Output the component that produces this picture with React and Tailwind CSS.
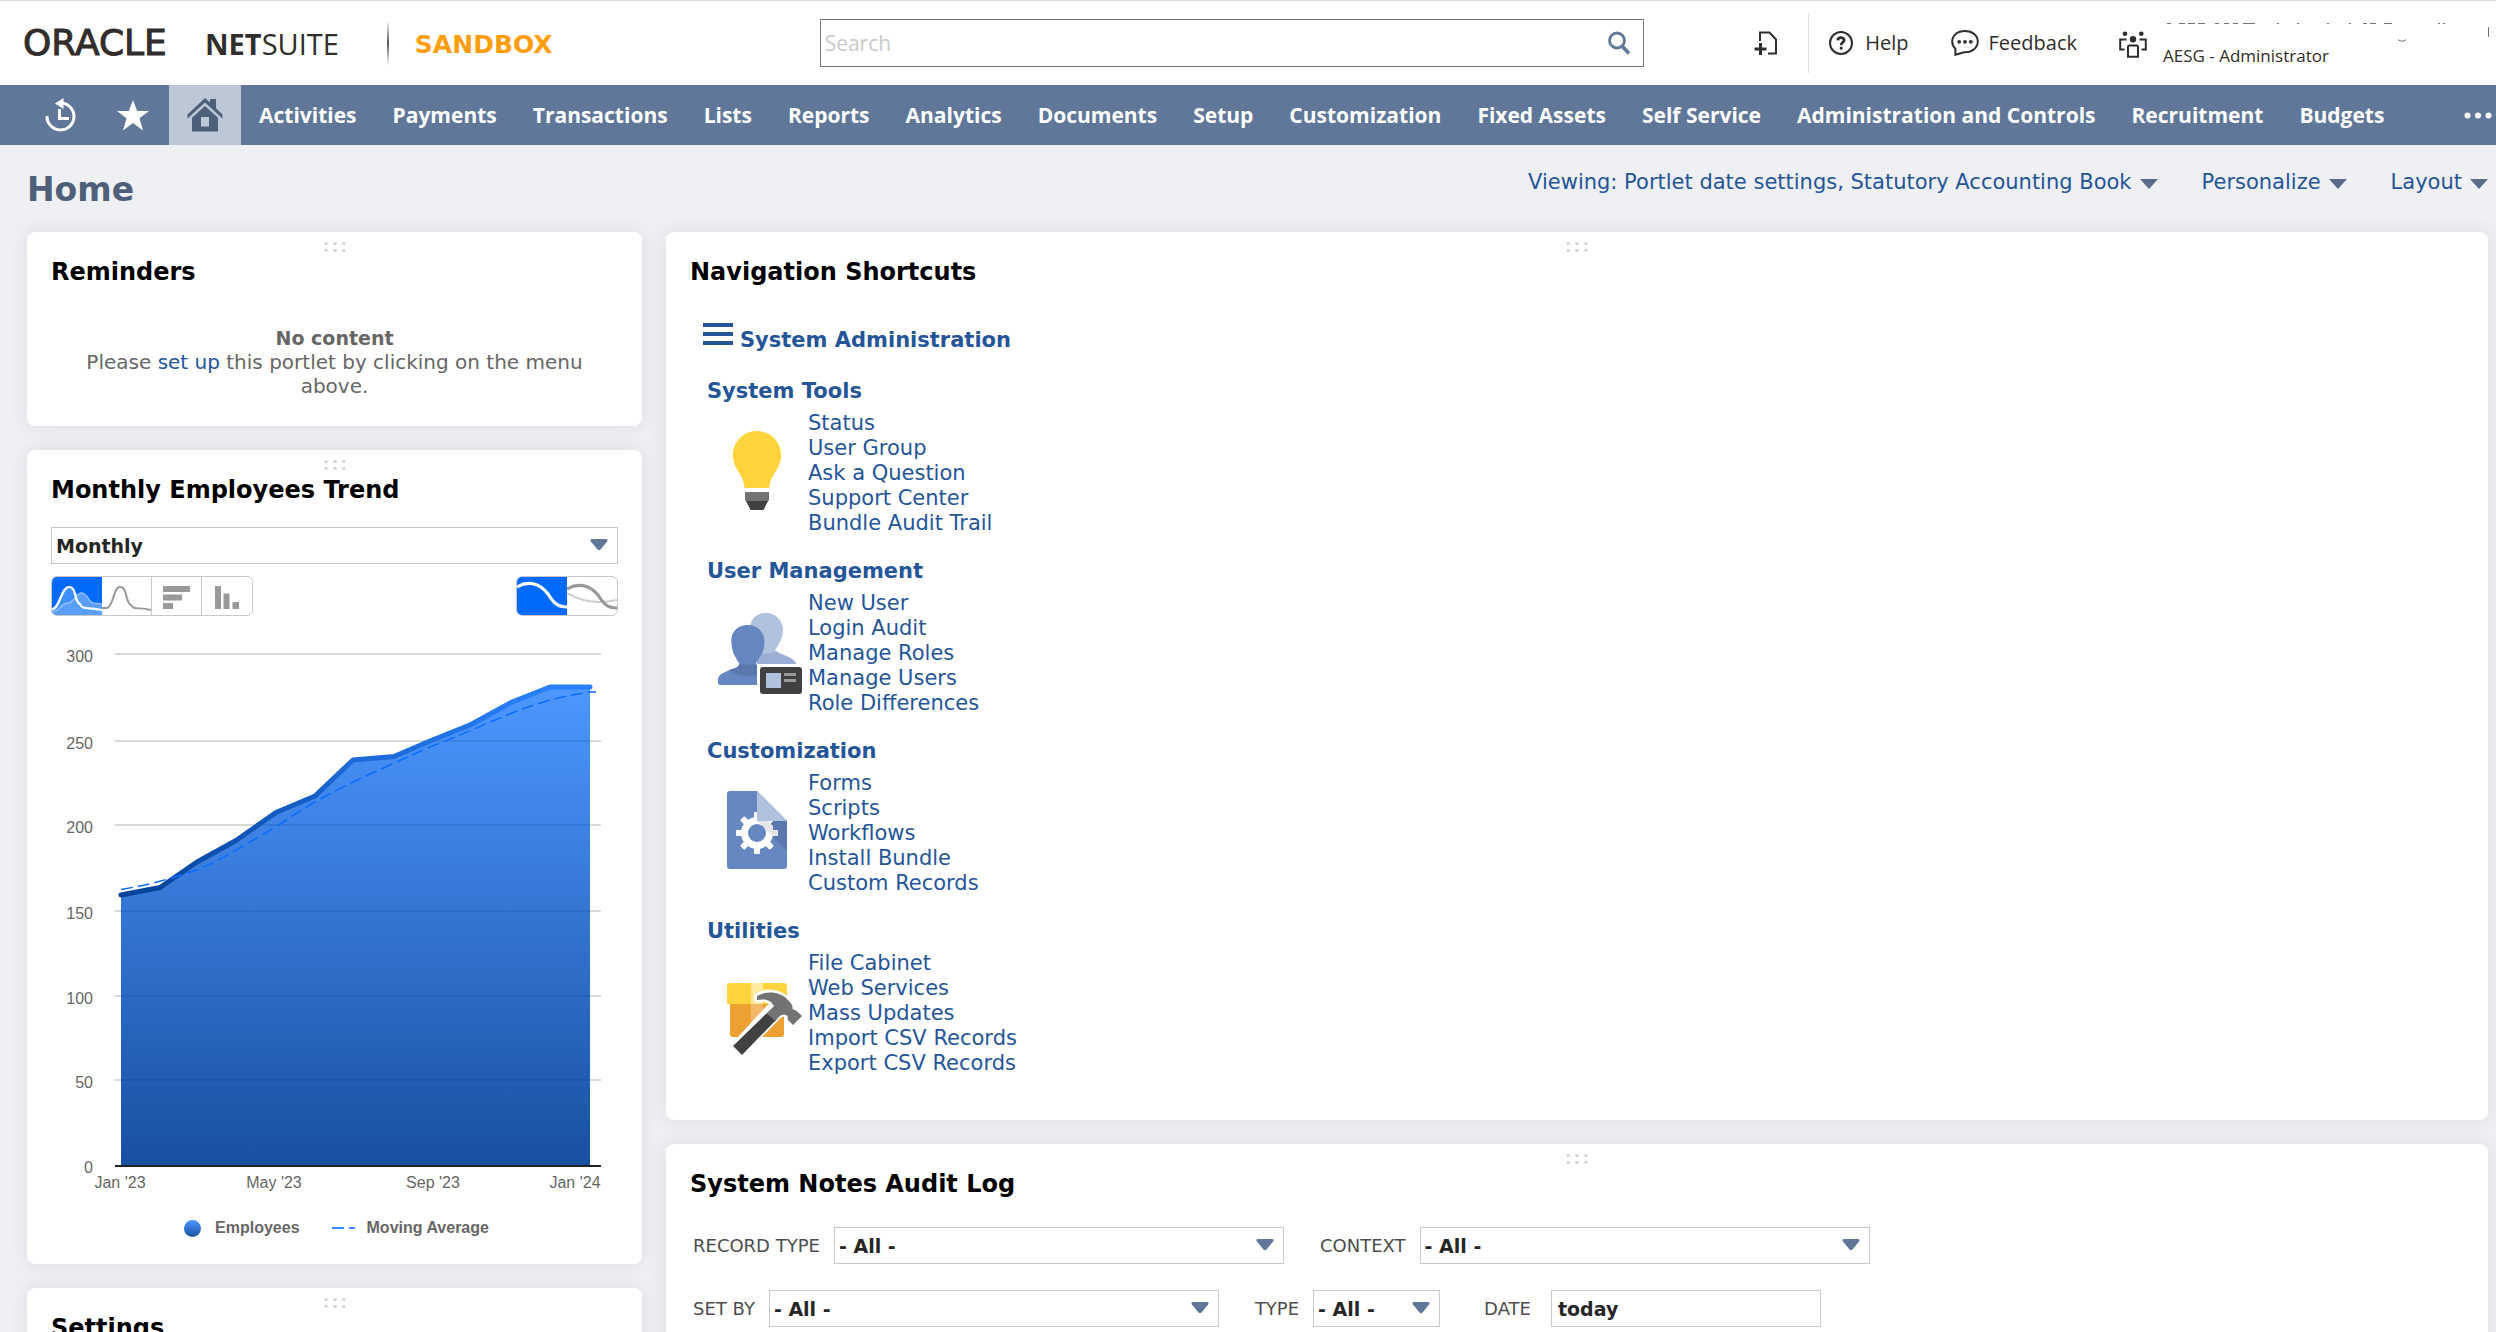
import React from "react";

const NAV_ITEMS = [
  "Activities",
  "Payments",
  "Transactions",
  "Lists",
  "Reports",
  "Analytics",
  "Documents",
  "Setup",
  "Customization",
  "Fixed Assets",
  "Self Service",
  "Administration and Controls",
  "Recruitment",
  "Budgets",
];

const BODY_FONT = "font-['Verdana','DejaVu_Sans',sans-serif]";
const UI_FONT = "font-['Open_Sans',sans-serif]";

/* ---------- header icons ---------- */

function SearchIcon() {
  return (
    <svg width="24" height="24" viewBox="0 0 24 24" fill="none" stroke="#607799" aria-hidden="true">
      <circle cx="10" cy="9.5" r="7.5" strokeWidth="2.8" />
      <path d="M15.5 15.5 L22 22.5" strokeWidth="3.6" />
    </svg>
  );
}

function AddFileIcon() {
  return (
    <svg width="24" height="24" viewBox="0 0 24 24" fill="none" stroke="#312d2a" strokeWidth="2" aria-hidden="true">
      <path d="M6 10 V1.5 H15.5 L22 8.5 V22.5 H14" />
      <path d="M0.5 18 H12.5 M6.5 12 V24" strokeWidth="3" />
    </svg>
  );
}

function HelpIcon() {
  return (
    <svg width="24" height="24" viewBox="0 0 24 24" fill="none" stroke="#312d2a" strokeWidth="2" aria-hidden="true">
      <circle cx="12" cy="12" r="11" />
      <path d="M8.8 9.4 C8.9 5.7 15.2 5.8 15.1 9.2 C15.1 11.6 12.2 11.3 12.2 14.2" strokeWidth="2.8" />
      <rect x="10.8" y="15.8" width="2.8" height="2.8" fill="#312d2a" stroke="none" />
    </svg>
  );
}

function FeedbackIcon() {
  return (
    <svg width="28" height="26" viewBox="0 0 28 26" fill="none" stroke="#312d2a" strokeWidth="2" aria-hidden="true">
      <path d="M14 1 C6.5 1 1.2 5.6 1.2 11.6 C1.2 14.6 2.4 17 4.4 18.8 V24.8 L13 22.3 C21.5 22.6 26.8 17.6 26.8 11.6 C26.8 5.6 21.5 1 14 1 Z" />
      <g fill="#312d2a" stroke="none">
        <circle cx="8.2" cy="11.8" r="1.9" />
        <circle cx="14" cy="11.8" r="1.9" />
        <circle cx="19.8" cy="11.8" r="1.9" />
      </g>
    </svg>
  );
}

function RolesIcon() {
  return (
    <svg width="28" height="27" viewBox="0 0 28 27" fill="none" stroke="#312d2a" strokeWidth="2" aria-hidden="true">
      <g fill="#312d2a" stroke="none">
        <circle cx="6" cy="2.8" r="2.3" />
        <circle cx="22.3" cy="2.8" r="2.3" />
        <circle cx="14" cy="8.2" r="3.2" />
      </g>
      <path d="M7.5 8.5 H1.2 V18.5 H5.5 M20.5 8.5 H26.8 V18.5 H22.5" />
      <path d="M9 25.8 V16 Q9 14.5 10.5 14.5 H17.5 Q19 14.5 19 16 V25.8 Z" />
    </svg>
  );
}

function AccountTrace() {
  return (
    <svg width="333" height="24" viewBox="0 0 333 24" fill="none" stroke="#77736f" aria-hidden="true">
      <path
        d="M4 3.5h4 M16 3.5h6 M25 3.5h7 M35 3.5h7 M52 3.5h4 M61 3.5h5 M70 3.5h5 M80 3.5h12 M114 3.5h2 M134 3.5h2 M164 3.5h2 M186 3.5h2 M200 3.5h4 M207 3.5h6 M221 3.5h8 M275 3.5h2 M280 3.5h2"
        strokeWidth="1"
      />
      <path d="M235 19.500 Q239 23 243 19.500 M325.500 7 V17" strokeWidth="1" />
    </svg>
  );
}

/* ---------- navigation bar icons ---------- */

function HistoryIcon() {
  return (
    <svg width="32" height="34" viewBox="0 0 32 34" fill="none" aria-hidden="true">
      <path d="M2 18 A13.5 13.500 0 1 0 15 5" stroke="#fff" strokeWidth="3" />
      <path d="M18.500 0 V11 L10 5.500 Z" fill="#fff" />
      <path d="M14.500 11 V20.500 H24" stroke="#fff" strokeWidth="3" />
    </svg>
  );
}

function StarIcon() {
  return (
    <svg width="32" height="31" viewBox="0 0 32 31" fill="#fff" aria-hidden="true">
      <path d="M16 0 L20.200 11 H32 L22.500 18.200 L26 30.500 L16 23 L6 30.500 L9.500 18.200 L0 11 H11.800 Z" />
    </svg>
  );
}

function HomeIcon() {
  return (
    <svg width="36" height="34" viewBox="0 0 36 34" fill="#4d5f79" aria-hidden="true">
      <path d="M18 0 L23 4.600 V1 H29 V10.200 L35.500 16.500 V20.500 L18 4.500 L0.500 20.500 V16.500 Z" />
      <path fillRule="evenodd" d="M18 8 L31 19.800 V33.500 H5 V19.800 Z M14 19 V28.500 H22 V19 Z" />
    </svg>
  );
}

/* ---------- shared pieces ---------- */

function Caret({ className = "" }) {
  return (
    <svg className={className} width="18" height="10" viewBox="0 0 18 10" fill="#5b6b8a" aria-hidden="true">
      <path d="M0 0 H18 L9 10 Z" />
    </svg>
  );
}

function SelectCaret() {
  return (
    <svg
      className="pointer-events-none absolute right-2.5 top-3"
      width="18"
      height="12"
      viewBox="0 0 18 12"
      fill="#607799"
      aria-hidden="true"
    >
      <path d="M2 0 H16 Q18 0 17.500 2 L10.500 10.500 Q9 12 7.500 10.500 L0.500 2 Q0 0 2 0 Z" />
    </svg>
  );
}

function Select({ id, label, value, className }) {
  return (
    <div className={`relative ${className}`}>
      <select
        id={id}
        aria-label={label}
        defaultValue={value}
        className="block h-[37px] w-full appearance-none rounded-none border border-[#c9c9c9] bg-white pl-1 pr-8 text-[19px] leading-6 font-bold text-[#262626]"
      >
        <option>{value}</option>
      </select>
      <SelectCaret />
    </div>
  );
}

function Portlet({ title, className = "", children }) {
  return (
    <section
      className={`relative rounded-lg bg-white px-6 pt-6 shadow-[0_0_18px_rgba(60,65,85,0.11)] ${className}`}
    >
      <svg
        className="absolute left-1/2 top-2.5 -translate-x-1/2"
        width="21"
        height="11"
        viewBox="0 0 21 11"
        fill="#d4d4d4"
        aria-hidden="true"
      >
        {[0, 9, 18].map((x) => (
          <g key={x}>
            <rect x={x} y="0" width="3" height="3" />
            <rect x={x} y="7" width="3" height="3" />
          </g>
        ))}
      </svg>
      <h2 className="text-2xl leading-8 font-bold text-black">{title}</h2>
      {children}
    </section>
  );
}

/* ---------- top area ---------- */

function Header() {
  return (
    <header
      className={`grid h-[85px] grid-cols-[820fr_825fr_851fr] items-center border-t border-[#d9d9d9] bg-white text-xl text-[#312d2a] ${UI_FONT}`}
    >
      <div className="flex items-center pl-[23px]">
        <div className="flex items-baseline whitespace-nowrap leading-10">
          <span className="w-[182px] font-['DejaVu_Sans',sans-serif] text-4xl leading-10 [-webkit-text-stroke:1px_#312d2a]">
            ORACLE
          </span>
          <span className="text-[29px] font-bold">NET</span>
          <span className="text-[29px]">SUITE</span>
        </div>
        <div className="ml-12 h-11 w-0.5 bg-linear-to-b from-transparent via-[#555] to-transparent" />
        <span className="ml-[26px] pt-1 font-['Verdana','DejaVu_Sans',sans-serif] text-[25px] leading-8 font-bold text-[#ff9e0d]">
          SANDBOX
        </span>
      </div>

      <form className="flex h-12 items-center border border-[#757575] bg-white pr-3" role="search">
        <input
          type="text"
          aria-label="Search"
          placeholder="Search"
          className="h-full flex-1 pl-1 text-[21px] text-[#262626] outline-none placeholder:text-[#c9c9c9]"
        />
        <button type="button" aria-label="Run search">
          <SearchIcon />
        </button>
      </form>

      <div className="flex items-center whitespace-nowrap pl-[110px]">
        <button type="button" aria-label="Create new">
          <AddFileIcon />
        </button>
        <div className="ml-[30px] mr-5 h-[60px] w-px bg-[#e0e0e0]" />
        <a href="#help" className="flex items-center gap-3">
          <HelpIcon />
          Help
        </a>
        <a href="#feedback" className="ml-[42px] flex items-center gap-2.5">
          <FeedbackIcon />
          Feedback
        </a>
        <button type="button" className="ml-[42px] flex items-center gap-4 pt-0.5 text-left">
          <RolesIcon />
          <span className="block">
            <AccountTrace />
            <span className="block text-[17px] leading-6">AESG - Administrator</span>
          </span>
        </button>
      </div>
    </header>
  );
}

function NavBar() {
  return (
    <nav
      className={`flex h-[60px] items-stretch whitespace-nowrap bg-[#607799] text-[21px] font-bold text-white ${UI_FONT}`}
    >
      <button type="button" aria-label="Recent records" className="ml-[25px] flex w-[72px] items-center justify-center">
        <HistoryIcon />
      </button>
      <button type="button" aria-label="Shortcuts" className="flex w-[72px] items-center justify-center">
        <StarIcon />
      </button>
      <a href="#home" aria-label="Home" className="flex w-[72px] items-center justify-center bg-[#bcc8d6]">
        <HomeIcon />
      </a>
      {NAV_ITEMS.map((item) => (
        <a key={item} href="#menu" className="flex items-center px-[18px] pt-0.5">
          {item}
        </a>
      ))}
      <button type="button" aria-label="More" className="ml-auto flex items-center pr-1">
        <svg width="28" height="7" viewBox="0 0 28 7" fill="#fff" aria-hidden="true">
          <circle cx="3.500" cy="3.500" r="3" />
          <circle cx="14" cy="3.500" r="3" />
          <circle cx="24.500" cy="3.500" r="3" />
        </svg>
      </button>
    </nav>
  );
}

function TitleBar() {
  return (
    <div className="flex items-start justify-between pb-[22px] pl-[27px] pr-2 pt-[25px]">
      <h1 className="text-[33px] leading-10 font-bold text-[#4d5f79]">Home</h1>
      <div className="flex gap-11 text-[21px] leading-6 text-[#255599]">
        <button type="button" className="flex items-center gap-2">
          Viewing: Portlet date settings, Statutory Accounting Book
          <Caret className="mt-1" />
        </button>
        <button type="button" className="flex items-center gap-2">
          Personalize
          <Caret className="mt-1" />
        </button>
        <button type="button" className="flex items-center gap-2">
          Layout
          <Caret className="mt-1" />
        </button>
      </div>
    </div>
  );
}

/* ---------- trend chart ---------- */

const GRID = [
  { value: "300", y: 14 },
  { value: "250", y: 101 },
  { value: "200", y: 185 },
  { value: "150", y: 271 },
  { value: "100", y: 356 },
  { value: "50", y: 440 },
];

const EMPLOYEES =
  "70,255 109,247.500 146,222 185,200.500 225,172.500 264,156 302,120 343,116.500 379,101 420,84.500 461,62 499,47 539,47";
const AVERAGE =
  "M70 249.500 C96 245 109 242 146 230 C172 219 185 210 225 187 C251 169 264 161 302 142 C328 130 343 123 379 107 C405 97 420 90 461 73 C480 66 499 58 539 52 H545";

function TrendChart() {
  return (
    <svg
      className="mt-6 block h-auto w-full font-['Liberation_Sans',sans-serif]"
      viewBox="0 0 567 560"
      role="img"
      aria-label="Monthly employees trend"
    >
      <defs>
        <linearGradient id="areaFill" x1="0" y1="47" x2="0" y2="526" gradientUnits="userSpaceOnUse">
          <stop offset="0" stopColor="#4d97ff" />
          <stop offset="1" stopColor="#1850a2" />
        </linearGradient>
        <linearGradient id="lineStroke" x1="0" y1="47" x2="0" y2="255" gradientUnits="userSpaceOnUse">
          <stop offset="0" stopColor="#2a80fc" />
          <stop offset="1" stopColor="#05439a" />
        </linearGradient>
      </defs>
      <g fill="#666" fontSize="16" textAnchor="end">
        {GRID.map(({ value, y }) => (
          <text key={value} x="42" y={y + 8}>
            {value}
          </text>
        ))}
        <text x="42" y="533">
          0
        </text>
      </g>
      <g stroke="#d5dad3" strokeWidth="2">
        {GRID.map(({ value, y }) => (
          <line key={value} x1="64" x2="550" y1={y} y2={y} />
        ))}
      </g>
      <polygon points={`${EMPLOYEES} 539,526 70,526`} fill="url(#areaFill)" />
      <g stroke="#003c8c" strokeOpacity="0.14" strokeWidth="2">
        {GRID.slice(1).map(({ value, y }, i) => (
          <line key={value} x1={[379, 206, 70, 70, 70][i]} x2="539" y1={y} y2={y} />
        ))}
      </g>
      <polyline
        points={EMPLOYEES}
        fill="none"
        stroke="url(#lineStroke)"
        strokeWidth="5"
        strokeLinecap="round"
        strokeLinejoin="round"
      />
      <path d={AVERAGE} fill="none" stroke="#0a6cff" strokeWidth="1.500" strokeDasharray="12 5" />
      <line x1="64" x2="550" y1="526" y2="526" stroke="#222" strokeWidth="2" />
      <g fill="#666" fontSize="16" textAnchor="middle">
        <text x="69" y="548">Jan '23</text>
        <text x="223" y="548">May '23</text>
        <text x="382" y="548">Sep '23</text>
        <text x="524" y="548">Jan '24</text>
      </g>
    </svg>
  );
}

function ChartTypeButtons() {
  return (
    <div className="flex h-10 overflow-hidden rounded-md border border-[#c9c9c9]">
      <button type="button" aria-label="Area chart" className="w-[50px]">
        <svg width="50" height="38" viewBox="0 0 50 38" fill="none" aria-hidden="true">
          <rect width="50" height="38" fill="#006aff" />
          <path d="M0 34 H4 C9 31 10 27 15 26 C22 27 23 17 29 16 C36 16 36 25 41 26 L50 27 V38 H0 Z" fill="#5a9fff" />
          <path d="M0 32 C6 32 9 10 17 10 C25 10 22 26 28 28 C30 33 36 30 50 33 V38 H0 Z" fill="#5a9fff" fillOpacity="0.7" />
          <path d="M0 34 H4 C9 31 10 27 15 26 C22 27 23 17 29 16 C36 16 36 25 41 26 L50 27" stroke="#8fbfff" strokeWidth="1.500" />
          <path d="M0 32 C8 32 9 10 17 10 C25 10 22 25 28 27 C30 33 36 30 50 33" stroke="#fff" strokeWidth="2.200" />
        </svg>
      </button>
      <button type="button" aria-label="Line chart" className="w-[50px] border-r border-[#c9c9c9]">
        <svg width="49" height="38" viewBox="0 0 49 38" fill="none" aria-hidden="true">
          <path d="M0 31 H5 C12 29 11 10 18 10 C26 10 23 26 29 28 C31 33 37 30 49 33" stroke="#999" strokeWidth="2" />
        </svg>
      </button>
      <button type="button" aria-label="Bar chart" className="w-[50px] border-r border-[#c9c9c9]">
        <svg width="49" height="38" viewBox="0 0 49 38" fill="#999" aria-hidden="true">
          <path d="M11 9 H38 V15 H11 Z M11 17.500 H30 V23.500 H11 Z M11 26 H21 V32 H11 Z" />
        </svg>
      </button>
      <button type="button" aria-label="Column chart" className="w-[50px]">
        <svg width="50" height="38" viewBox="0 0 50 38" fill="#999" aria-hidden="true">
          <path d="M13 9 H19 V32 H13 Z M21.500 16.500 H27.500 V32 H21.500 Z M30.500 25 H37 V32 H30.500 Z" />
        </svg>
      </button>
    </div>
  );
}

function AverageButtons() {
  return (
    <div className="flex h-10 overflow-hidden rounded-md border border-[#c9c9c9]">
      <button type="button" aria-label="Hide moving average" className="w-[50px]">
        <svg width="50" height="38" viewBox="0 0 50 38" fill="none" aria-hidden="true">
          <rect width="50" height="38" fill="#006aff" />
          <path d="M0 10 C10 4 22 5 31 17 C36 25 40 30 50 30" stroke="#fff" strokeWidth="3.200" />
        </svg>
      </button>
      <button type="button" aria-label="Show moving average" className="w-[50px]">
        <svg width="50" height="38" viewBox="0 0 50 38" fill="none" aria-hidden="true">
          <path d="M0 16 C12 23 28 28 50 23" stroke="#ccc" strokeWidth="2" />
          <path d="M0 12 C10 6 22 7 31 18 C36 26 40 31 50 31" stroke="#999" strokeWidth="3.200" />
        </svg>
      </button>
    </div>
  );
}

function TrendPortlet() {
  return (
    <Portlet title="Monthly Employees Trend" className="pb-6">
      <Select id="period" label="Period" value="Monthly" className="mt-[21px]" />
      <div className="mt-3 flex justify-between">
        <ChartTypeButtons />
        <AverageButtons />
      </div>
      <TrendChart />
      <div className="mt-4 flex items-center justify-center pl-1 text-base font-bold text-[#666] font-['Liberation_Sans',sans-serif]">
        <svg width="17" height="17" viewBox="0 0 17 17" aria-hidden="true">
          <defs>
            <linearGradient id="legendDot" x1="0" y1="0" x2="0" y2="1">
              <stop offset="0" stopColor="#4d97ff" />
              <stop offset="1" stopColor="#1850a2" />
            </linearGradient>
          </defs>
          <circle cx="8.500" cy="8.500" r="8.500" fill="url(#legendDot)" />
        </svg>
        <span className="ml-3.5">Employees</span>
        <svg className="ml-8" width="23" height="2" viewBox="0 0 23 2" fill="#3a8bff" aria-hidden="true">
          <rect width="12" height="2" />
          <rect x="17" width="6" height="2" />
        </svg>
        <span className="ml-3">Moving Average</span>
      </div>
    </Portlet>
  );
}

/* ---------- shortcut illustrations ---------- */

function BulbIcon() {
  return (
    <svg width="96" height="96" viewBox="0 0 96 96" aria-hidden="true">
      <path
        d="M48 8 C34 8 24 19 24 32 C24 48 35 50 35.500 65 H60.500 C61 50 72 48 72 32 C72 19 62 8 48 8 Z"
        fill="#ffd43c"
      />
      <path d="M36 69 H60 V77 L58.500 79 H37.500 L36 77 Z" fill="#737373" />
      <path d="M37 78 H59 L54.500 87 H41.500 Z" fill="#414141" />
    </svg>
  );
}

function UsersIcon() {
  return (
    <svg width="96" height="96" viewBox="0 0 96 96" aria-hidden="true">
      <path d="M57 10 C46 10 40 18 41 28 C41 38 45 45 48 49 L48 62 H88 C87 56 76 52 70 50 C65 48 66 47 68 44 C72 38 74 33 74 26 C73 17 67 10 57 10 Z" fill="#b1c2df" />
      <path d="M48 49 C56 52 63 51 67 48 C75 54 86 54 87 62 H48 Z" fill="#9aaed8" />
      <path d="M38.500 22 C28 22 21 30 22.500 40 C23 50 27 55 30 60 C31 64 26 65 21 67 C13 70 9 72 9 77 V80 Q9 82 11 82 H66 V67 C58 64 47 65 47 61 C48 56 55 52 55.500 40 C56 30 49 22 38.500 22 Z" fill="#6586c0" />
      <path d="M30 61 Q38.500 62.500 47 61 C48 63 54 64 60 66 C53 75 28 75 20 67 C26 65 30 65 30 61 Z" fill="#5a78ad" />
      <path d="M48 61 H94 V96 H48 Z" fill="#fff" />
      <rect x="51" y="64" width="42" height="27" rx="3" fill="#414141" />
      <rect x="57" y="70" width="15" height="15" fill="#b1c2df" />
      <path d="M75 70 H87 V73 H75 Z M75 76 H87 V79 H75 Z" fill="#999" />
    </svg>
  );
}

function GearFileIcon() {
  return (
    <svg width="96" height="96" viewBox="0 0 96 96" aria-hidden="true">
      <path d="M21 8 H48 L78 38 V83 Q78 86 75 86 H21 Q18 86 18 83 V11 Q18 8 21 8 Z" fill="#6586c0" />
      <path d="M48 38 H78 V68 Z" fill="#5a78ad" />
      <g fill="#fff" transform="translate(48 50)">
        {[0, 45, 90, 135, 180, 225, 270, 315].map((a) => (
          <rect key={a} x="-3" y="-21" width="6" height="9" rx="1" transform={`rotate(${a})`} />
        ))}
        <circle r="16" />
      </g>
      <path d="M48 38 H59 L64 43 V47 H69 V53 H64 Z" fill="#e6e6e6" />
      <circle cx="48" cy="50" r="9" fill="#6586c0" />
      <path d="M48 8 L78 38 H48 Z" fill="#b1c2df" />
    </svg>
  );
}

function HammerIcon() {
  return (
    <svg width="96" height="96" viewBox="0 0 96 96" aria-hidden="true">
      <path d="M21 30 H75 V71 Q75 74 72 74 H24 Q21 74 21 71 Z" fill="#eda133" />
      <path d="M42 30 H54 V62 H42 Z" fill="#f2b868" />
      <path d="M18 41 V23 Q18 20 21 20 H75 Q78 20 78 23 V41 Z" fill="#ffd43c" />
      <path d="M42 20 H54 V41 H42 Z" fill="#ffea9c" />
      <path
        d="M48 33 C58 26 72 29 79 37 L84 44 C84 47 85 48 88 48 L93 53 L84 62 L79 57 V53 C76 50 73 51 70 53 L33 91 L24 83 L59 45 L64 42 C60 36 55 36 48 37 Z"
        fill="#fff"
        stroke="#fff"
        strokeWidth="5"
        strokeLinejoin="round"
      />
      <path d="M48 33 C58 27 72 29 79 37 C82 40 84 42 83.500 46 L87 47.500 L93 53 L84 62 L79 57 L78.500 53 C75 50 71 51 66 59 L58 50 L65 43 C61 36 55 36 48 37 Z" fill="#737373" />
      <path d="M58 50 L66 58 L33 92 L24 83 Z" fill="#414141" />
    </svg>
  );
}

const SHORTCUTS = [
  {
    title: "System Tools",
    Icon: BulbIcon,
    links: ["Status", "User Group", "Ask a Question", "Support Center", "Bundle Audit Trail"],
  },
  {
    title: "User Management",
    Icon: UsersIcon,
    links: ["New User", "Login Audit", "Manage Roles", "Manage Users", "Role Differences"],
  },
  {
    title: "Customization",
    Icon: GearFileIcon,
    links: ["Forms", "Scripts", "Workflows", "Install Bundle", "Custom Records"],
  },
  {
    title: "Utilities",
    Icon: HammerIcon,
    links: ["File Cabinet", "Web Services", "Mass Updates", "Import CSV Records", "Export CSV Records"],
  },
];

function ShortcutsPortlet() {
  return (
    <Portlet title="Navigation Shortcuts" className="pb-11">
      <div className="text-[21px] text-[#255599]">
        <div className="mt-[35px] flex h-[29px] items-end gap-[7px] pl-[13px]">
          <svg className="self-start" width="30" height="22" viewBox="0 0 30 22" fill="#255599" aria-hidden="true">
            <path d="M0 0 H30 V4 H0 Z M0 9 H30 V13 H0 Z M0 18 H30 V22 H0 Z" />
          </svg>
          <a href="#admin" className="leading-6 font-bold">
            System Administration
          </a>
        </div>
        <div className="mt-[27px] flex flex-col gap-[23px] pl-[17px]">
          {SHORTCUTS.map(({ title, Icon, links }) => (
            <div key={title}>
              <h3 className="leading-6 font-bold">{title}</h3>
              <div className="mt-2 flex items-center">
                <div className="ml-0.5 mr-[3px] pb-1.5">
                  <Icon />
                </div>
                <ul className="leading-[25px]">
                  {links.map((link) => (
                    <li key={link}>
                      <a href="#shortcut">{link}</a>
                    </li>
                  ))}
                </ul>
              </div>
            </div>
          ))}
        </div>
      </div>
    </Portlet>
  );
}

/* ---------- audit log ---------- */

function Field({ id, label, className, children }) {
  return (
    <div className={`flex items-center gap-3.5 ${className || ""}`}>
      <label htmlFor={id} className="whitespace-nowrap text-lg leading-6 text-[#4d4d4d]">
        {label}
      </label>
      {children}
    </div>
  );
}

function AuditLogPortlet() {
  return (
    <Portlet title="System Notes Audit Log" className="pb-8">
      <form className="mt-[27px] flex flex-col gap-[26px] pl-[3px]">
        <div className="flex gap-9">
          <Field id="record-type" label="RECORD TYPE">
            <Select id="record-type" value="- All -" className="w-[450px]" />
          </Field>
          <Field id="context" label="CONTEXT">
            <Select id="context" value="- All -" className="w-[450px]" />
          </Field>
        </div>
        <div className="flex">
          <Field id="set-by" label="SET BY">
            <Select id="set-by" value="- All -" className="w-[450px]" />
          </Field>
          <Field id="note-type" label="TYPE" className="ml-9">
            <Select id="note-type" value="- All -" className="w-[127px]" />
          </Field>
          <Field id="note-date" label="DATE" className="ml-11">
            <input
              id="note-date"
              type="text"
              defaultValue="today"
              className="ml-1.5 h-[37px] w-[270px] border border-[#c9c9c9] bg-white pl-1.5 text-[19px] font-bold text-[#262626]"
            />
          </Field>
        </div>
      </form>
    </Portlet>
  );
}

export default function App() {
  return (
    <div className={`h-screen overflow-hidden bg-[#eff0f4] ${BODY_FONT}`}>
      <Header />
      <NavBar />
      <TitleBar />
      <main className="grid grid-cols-[615px_minmax(0,1fr)] items-start gap-6 pl-[27px] pr-2">
        <div className="flex flex-col gap-6">
          <Portlet title="Reminders" className="pb-7">
            <div className="mt-[38px] px-8 text-center text-xl leading-6 text-[#666]">
              <p className="text-[19px] leading-6 font-bold">No content</p>
              <p>
                Please{" "}
                <a href="#setup" className="text-[#255599]">
                  set up
                </a>{" "}
                this portlet by clicking on the menu above.
              </p>
            </div>
          </Portlet>
          <TrendPortlet />
          <Portlet title="Settings" className="pb-10" />
        </div>
        <div className="flex flex-col gap-6">
          <ShortcutsPortlet />
          <AuditLogPortlet />
        </div>
      </main>
    </div>
  );
}
